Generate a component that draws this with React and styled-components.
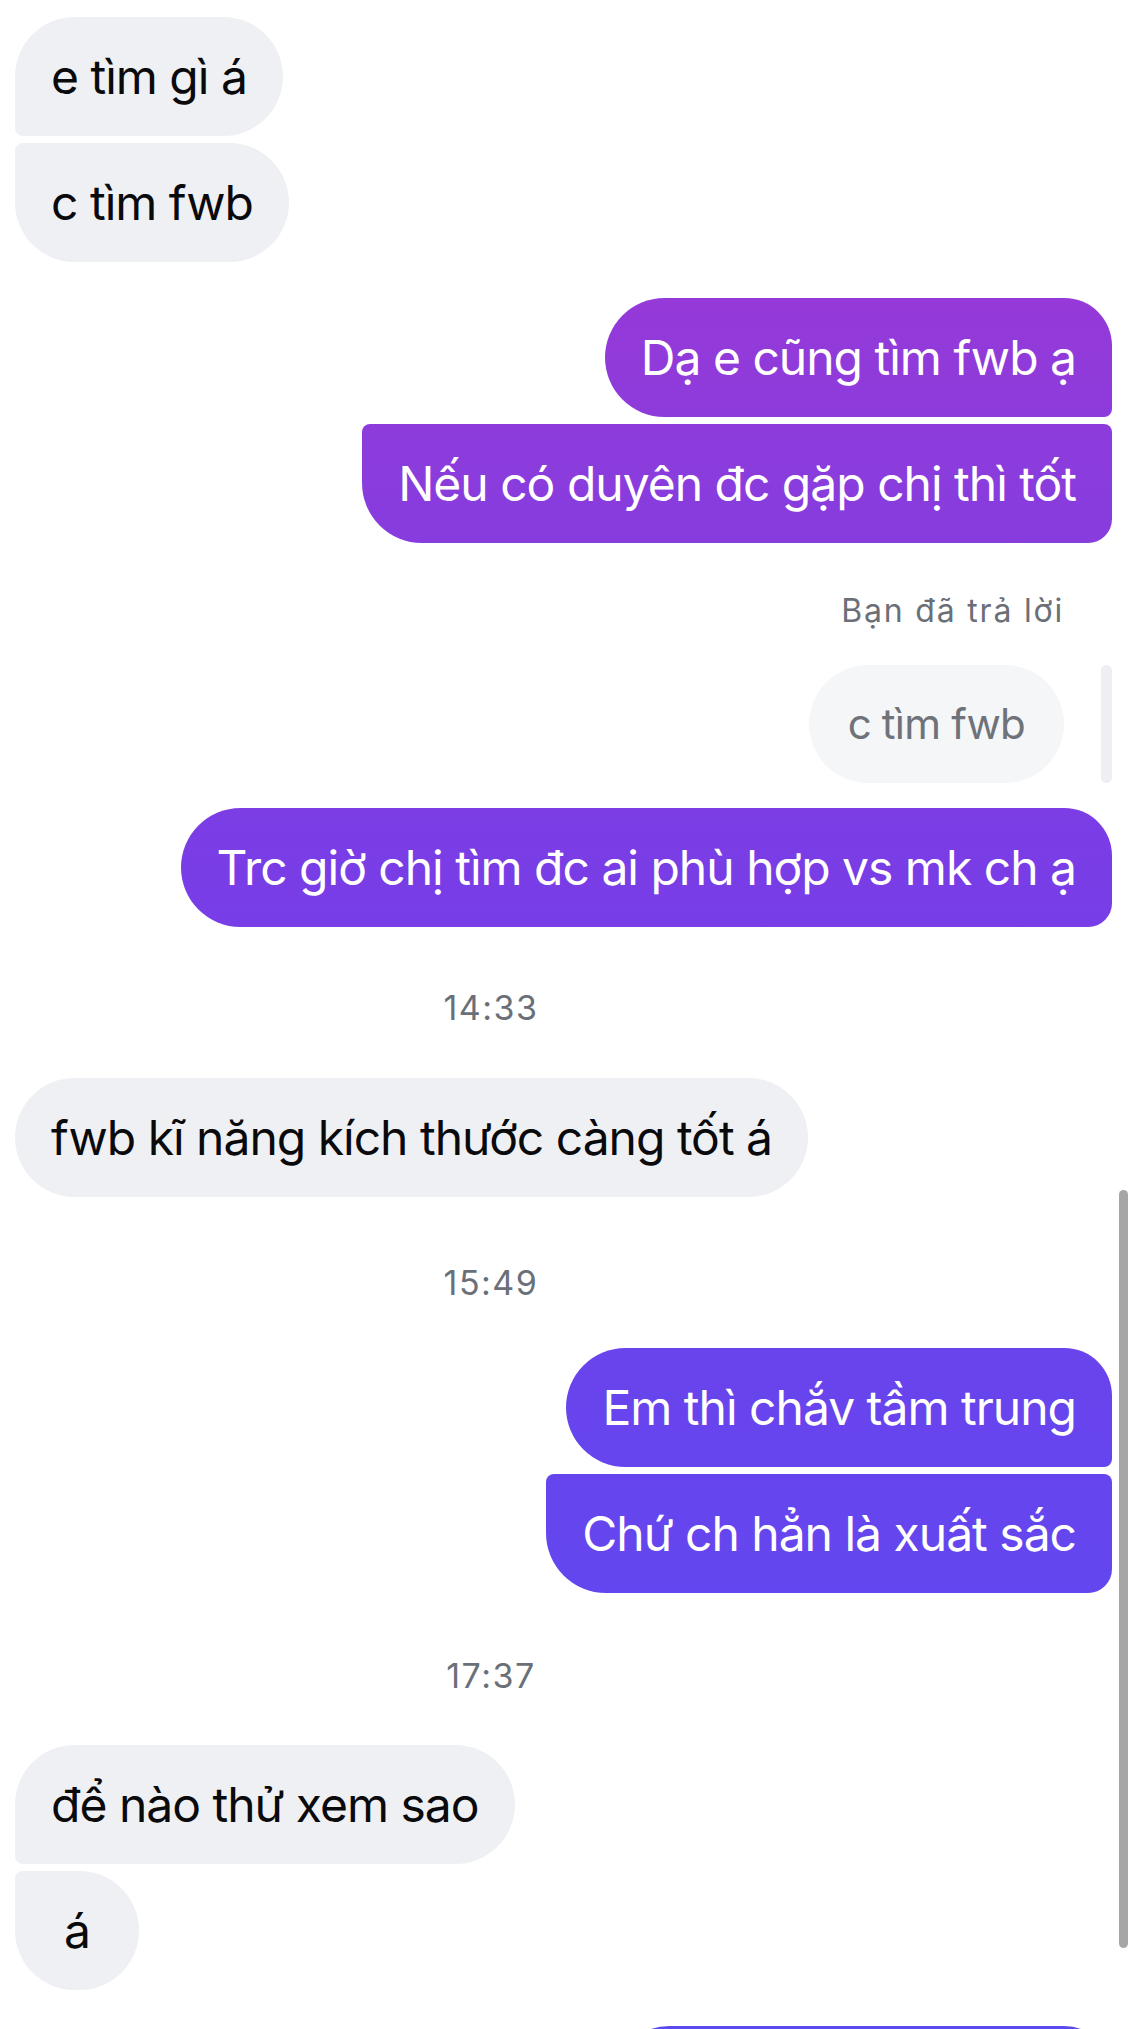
import React from "react";
import styled, { createGlobalStyle, css } from "styled-components";

const Global = createGlobalStyle`
  html, body { margin: 0; padding: 0; background: #ffffff; }
  body { font-family: Inter, "Noto Sans", "Liberation Sans", sans-serif; }
`;

const Page = styled.div`
  position: relative;
  width: 1137px;
  height: 2029px;
  overflow: hidden;
  background: #ffffff;
`;

const Thread = styled.div`
  display: flex;
  flex-direction: column;
  padding: 17px 25px 0 15px;
`;

const Group = styled.div`
  display: flex;
  flex-direction: column;
  align-items: ${(p) => (p.$side === "right" ? "flex-end" : "flex-start")};
  gap: 7px;
  margin-top: ${(p) => p.$mt || 0}px;
`;

const FULL = 60;
const SMALL = 8;

const radius = (side, pos) => {
  const tail = pos === "last" || pos === "single" ? (side === "right" ? 24 : FULL) : SMALL;
  const head = pos === "first" || pos === "single" ? FULL : SMALL;
  if (side === "right") {
    return `${head}px ${head === FULL ? 48 : SMALL}px ${tail}px ${FULL}px`;
  }
  return `${head}px ${FULL}px ${FULL}px ${tail}px`;
};

const Bubble = styled.div`
  box-sizing: border-box;
  height: 119px;
  min-width: 124px;
  padding: 0 36px;
  display: flex;
  align-items: center;
  justify-content: center;
  font-size: 48px;
  line-height: 60px;
  letter-spacing: -1px;
  white-space: nowrap;
  border-radius: ${(p) => radius(p.$side, p.$pos)};
  ${(p) =>
    p.$side === "right"
      ? css`
          color: #ffffff;
          background: linear-gradient(
              180deg,
              #a034d4 0px,
              #9539d9 300px,
              #8a3cdd 480px,
              #793de6 870px,
              #6844ed 1400px,
              #6346ef 1600px,
              #5b4af0 2029px
            )
            fixed;
        `
      : css`
          color: #0a0a0c;
          background: #eff0f3;
        `}
`;

const PeekBubble = styled(Bubble)`
  width: 502px;
`;

const ReplyLabel = styled.div`
  font-size: 32px;
  line-height: 36px;
  letter-spacing: 1.8px;
  color: #6b6f77;
  padding-right: 48px;
  margin-bottom: 36px;
`;

const ReplyRow = styled.div`
  display: flex;
  align-items: stretch;
  gap: 37px;
`;

const QuoteBubble = styled.div`
  box-sizing: border-box;
  height: 118px;
  padding: 0 39px;
  display: flex;
  align-items: center;
  font-size: 42px;
  line-height: 56px;
  letter-spacing: -0.8px;
  color: #6f7279;
  background: #f5f6f8;
  border-radius: 59px;
  white-space: nowrap;
`;

const QuoteBar = styled.div`
  width: 11px;
  border-radius: 6px;
  background: #eeeff2;
`;

const Timestamp = styled.div`
  font-size: 34px;
  line-height: 40px;
  letter-spacing: 1.5px;
  color: #6b7078;
  text-align: center;
  padding-right: 145px;
  margin: ${(p) => p.$mt}px 0 ${(p) => p.$mb}px;
`;

const Scrollbar = styled.div`
  position: absolute;
  left: 1119px;
  top: 1190px;
  width: 9px;
  height: 758px;
  border-radius: 5px;
  background: #a6a6a6;
`;

export default function App() {
  return (
    <>
      <Global />
      <Page>
        <Thread>
          <Group $side="left">
            <Bubble $side="left" $pos="first">e tìm gì á</Bubble>
            <Bubble $side="left" $pos="last">c tìm fwb</Bubble>
          </Group>

          <Group $side="right" $mt={36}>
            <Bubble $side="right" $pos="first">Dạ e cũng tìm fwb ạ</Bubble>
            <Bubble $side="right" $pos="last">Nếu có duyên đc gặp chị thì tốt</Bubble>
          </Group>

          <Group $side="right" $mt={50}>
            <ReplyLabel>Bạn đã trả lời</ReplyLabel>
          </Group>
          <Group $side="right">
            <ReplyRow>
              <QuoteBubble>c tìm fwb</QuoteBubble>
              <QuoteBar />
            </ReplyRow>
          </Group>
          <Group $side="right" $mt={25}>
            <Bubble $side="right" $pos="single">Trc giờ chị tìm đc ai phù hợp vs mk ch ạ</Bubble>
          </Group>

          <Timestamp $mt={61} $mb={50}>14:33</Timestamp>

          <Group $side="left">
            <Bubble $side="left" $pos="single">fwb kĩ năng kích thước càng tốt á</Bubble>
          </Group>

          <Timestamp $mt={66} $mb={45}>15:49</Timestamp>

          <Group $side="right">
            <Bubble $side="right" $pos="first">Em thì chắv tầm trung</Bubble>
            <Bubble $side="right" $pos="last">Chứ ch hẳn là xuất sắc</Bubble>
          </Group>

          <Timestamp $mt={63} $mb={49}>17:37</Timestamp>

          <Group $side="left">
            <Bubble $side="left" $pos="first">để nào thử xem sao</Bubble>
            <Bubble $side="left" $pos="last">á</Bubble>
          </Group>

          <Group $side="right" $mt={36}>
            <PeekBubble $side="right" $pos="single" aria-hidden="true" />
          </Group>
        </Thread>
        <Scrollbar />
      </Page>
    </>
  );
}
